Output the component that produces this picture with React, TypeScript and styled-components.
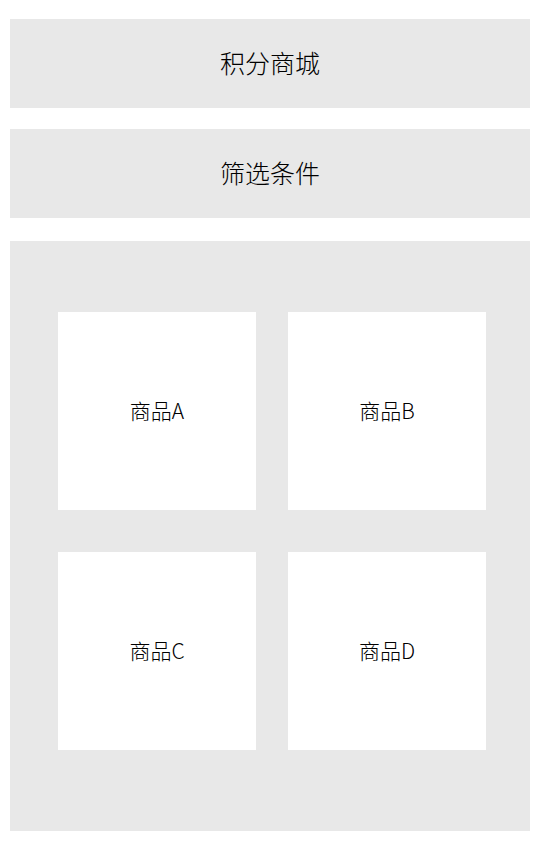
import React from 'react'
import styled, { createGlobalStyle } from 'styled-components'

const GlobalStyle = createGlobalStyle`
  html, body {
    margin: 0;
    padding: 0;
    background: #fff;
  }
  body {
    font-family: 'Noto Sans CJK SC', 'Noto Sans', sans-serif;
    color: #000;
  }
`

const Page = styled.div`
  display: flex;
  flex-direction: column;
  padding: 19px 10px 20px;
`

const Bar = styled.div<{ gapAfter: number }>`
  height: 89px;
  margin-bottom: ${({ gapAfter }) => gapAfter}px;
  background: #e8e8e8;
  display: flex;
  align-items: center;
  justify-content: center;
  font-size: 25px;
  font-weight: 300;
  padding-bottom: 3px;
  box-sizing: border-box;
`

const Goods = styled.div`
  height: 590px;
  box-sizing: border-box;
  background: #e8e8e8;
  padding: 71px 44px 81px 48px;
  display: grid;
  grid-template-columns: 198px 198px;
  grid-auto-rows: 198px;
  column-gap: 32px;
  row-gap: 42px;
`

const Card = styled.div`
  background: #fff;
  display: flex;
  align-items: center;
  justify-content: center;
  font-size: 21px;
  font-weight: 300;
  padding-bottom: 2px;
  box-sizing: border-box;
`

const items = ['商品A', '商品B', '商品C', '商品D']

export default function App() {
  return (
    <>
      <GlobalStyle />
      <Page>
        <Bar gapAfter={21}>积分商城</Bar>
        <Bar gapAfter={23}>筛选条件</Bar>
        <Goods>
          {items.map((name) => (
            <Card key={name}>{name}</Card>
          ))}
        </Goods>
      </Page>
    </>
  )
}
